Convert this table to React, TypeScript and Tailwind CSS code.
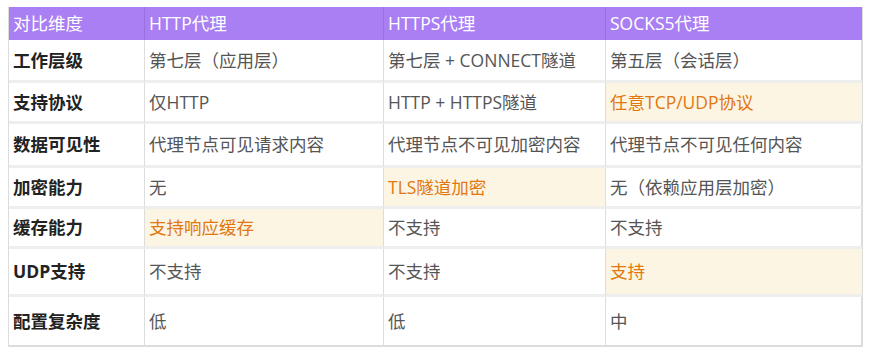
const rows: { label: string; cells: string[]; hl: number; h: string }[] = [
  { label: '工作层级', cells: ['第七层（应用层）', '第七层 + CONNECT隧道', '第五层（会话层）'], hl: -1, h: 'h-[43px]' },
  { label: '支持协议', cells: ['仅HTTP', 'HTTP + HTTPS隧道', '任意TCP/UDP协议'], hl: 2, h: 'h-[41px]' },
  { label: '数据可见性', cells: ['代理节点可见请求内容', '代理节点不可见加密内容', '代理节点不可见任何内容'], hl: -1, h: 'h-[44px]' },
  { label: '加密能力', cells: ['无', 'TLS隧道加密', '无（依赖应用层加密）'], hl: 1, h: 'h-[41px]' },
  { label: '缓存能力', cells: ['支持响应缓存', '不支持', '不支持'], hl: 0, h: 'h-[40px]' },
  { label: 'UDP支持', cells: ['不支持', '不支持', '支持'], hl: 2, h: 'h-[48px]' },
  { label: '配置复杂度', cells: ['低', '低', '中'], hl: -1, h: 'h-[48px]' },
];

const headers = ['对比维度', 'HTTP代理', 'HTTPS代理', 'SOCKS5代理'];

export default function App() {
  return (
    <div
      className="w-[870px] h-[351px] bg-white pl-2 pt-[7px]"
      style={{ fontFamily: '"Open Sans", "Noto Sans CJK SC", sans-serif' }}
    >
      <div className="w-[855px] border-l border-r-2 border-b-2 border-[#dcdcdc] grid grid-cols-[135px_239px_222px_257px] text-[17.5px]">
        {headers.map((h, i) => (
          <div
            key={h}
            className={`h-[33px] bg-[#a97ff3] text-white flex items-center px-[4px] ${i > 0 ? 'border-l border-[#9a6fe0]' : ''}`}
          >
            {h}
          </div>
        ))}
        {rows.map((r, ri) => (
          <div key={r.label} className="contents">
            <div
              className={`${r.h} flex items-center px-[4px] font-bold text-[#222] ${ri < rows.length - 1 ? 'border-b-[3px] border-[#eeeeee]' : ''}`}
            >
              {r.label}
            </div>
            {r.cells.map((c, ci) => (
              <div
                key={ci}
                className={`${r.h} flex items-center px-[4px] border-l border-l-[#dddddd] ${ri < rows.length - 1 ? 'border-b-[3px] border-b-[#eeeeee]' : ''} ${ci === r.hl ? 'bg-[#fdf5e4] text-[#e0780e]' : 'text-[#555]'}`}
              >
                {c}
              </div>
            ))}
          </div>
        ))}
      </div>
    </div>
  );
}
